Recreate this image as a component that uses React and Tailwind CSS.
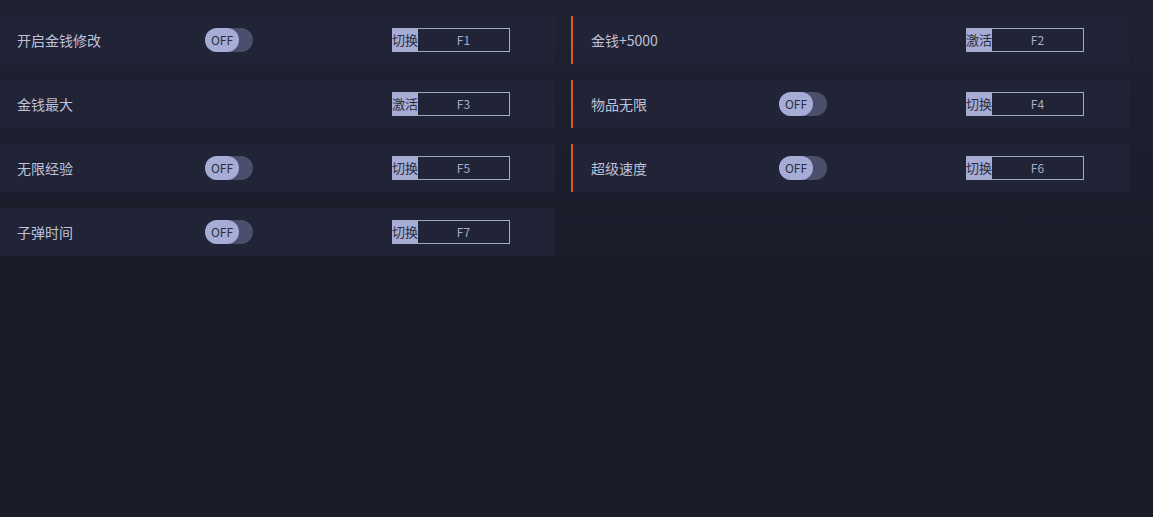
import React from 'react';

const rowsLeft = [
  { label: '开启金钱修改', toggle: true, action: '切换', key: 'F1' },
  { label: '金钱最大', toggle: false, action: '激活', key: 'F3' },
  { label: '无限经验', toggle: true, action: '切换', key: 'F5' },
  { label: '子弹时间', toggle: true, action: '切换', key: 'F7' },
];

const rowsRight = [
  { label: '金钱+5000', toggle: false, action: '激活', key: 'F2' },
  { label: '物品无限', toggle: true, action: '切换', key: 'F4' },
  { label: '超级速度', toggle: true, action: '切换', key: 'F6' },
];

function Toggle() {
  return (
    <div className="w-[48px] h-[24px] rounded-full bg-[#4b4f6b] flex items-center">
      <div className="w-[34px] h-[24px] rounded-full bg-[#a7acd6] flex items-center justify-center text-[12px] text-[#2a2c40]">
        OFF
      </div>
    </div>
  );
}

function KeyBox({ action, keyName }) {
  return (
    <div className="flex h-[24px] w-[118px] border border-[#a3a7c9]">
      <div className="w-[26px] bg-[#a7acd6] text-[#2a2c40] text-[13px] leading-[22px] flex items-center justify-center -ml-px">
        {action}
      </div>
      <div className="flex-1 flex items-center justify-center text-[12px] text-[#a9acc4]">{keyName}</div>
    </div>
  );
}

function Row({ item, right }) {
  return (
    <div
      className={
        right
          ? 'h-[48px] bg-[#212337] flex items-center border-l-2 border-[#e2571e] pl-[18px]'
          : 'h-[48px] bg-[#212337] flex items-center pl-[17px]'
      }
    >
      <div className="w-[188px] text-[14px] text-[#bfc2d8]">{item.label}</div>
      <div className="w-[187px]">{item.toggle && <Toggle />}</div>
      <KeyBox action={item.action} keyName={item.key} />
    </div>
  );
}

export default function App() {
  return (
    <div
      className="w-[1153px] h-[517px] overflow-hidden bg-[#1a1b29] bg-gradient-to-b from-[#202131] via-[#1b1c2a] to-[#1a1b29]"
      style={{ fontFamily: '"Noto Sans CJK SC", "Noto Sans", sans-serif' }}
    >
      <div className="pt-4 grid grid-cols-[555px_558px] gap-x-4">
        <div className="flex flex-col gap-4">
          {rowsLeft.map((r) => (
            <Row key={r.key} item={r} />
          ))}
        </div>
        <div className="flex flex-col gap-4">
          {rowsRight.map((r) => (
            <Row key={r.key} item={r} right />
          ))}
        </div>
      </div>
    </div>
  );
}
